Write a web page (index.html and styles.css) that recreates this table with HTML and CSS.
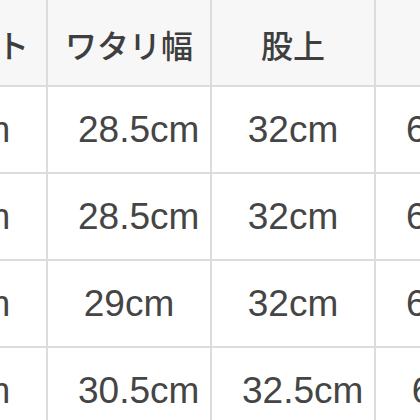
FILE: index.html
```html
<!DOCTYPE html>
<html lang="ja">
<head>
<meta charset="utf-8">
<link rel="stylesheet" href="styles.css">
</head>
<body>
<div class="viewport">
  <div class="size-table">
    <div class="cell head">ウエスト</div>
    <div class="cell head">ワタリ幅</div>
    <div class="cell head">股上</div>
    <div class="cell head">股下</div>

    <div class="cell">38cm</div>
    <div class="cell">28.5cm</div>
    <div class="cell">32cm</div>
    <div class="cell">64.5cm</div>

    <div class="cell">40cm</div>
    <div class="cell">28.5cm</div>
    <div class="cell">32cm</div>
    <div class="cell">64.5cm</div>

    <div class="cell">42cm</div>
    <div class="cell">29cm</div>
    <div class="cell">32cm</div>
    <div class="cell">65.5cm</div>

    <div class="cell">44cm</div>
    <div class="cell">30.5cm</div>
    <div class="cell">32.5cm</div>
    <div class="cell">66cm</div>
  </div>
</div>
</body>
</html>
```

FILE: styles.css
```css
html, body {
  margin: 0;
  padding: 0;
  background: #ffffff;
}

.viewport {
  width: 420px;
  height: 420px;
  overflow: hidden;
}

.size-table {
  display: grid;
  grid-template-columns: repeat(4, 162px);
  grid-auto-rows: 85px;
  gap: 2px;
  width: max-content;
  margin-left: -116px;
  background: #dcdcdc;
  font-family: "Liberation Sans", Arial, "Noto Sans CJK JP", sans-serif;
  color: #454545;
}

.cell {
  background: #ffffff;
  padding: 0 30px;
  white-space: nowrap;
  text-align: center;
  font-size: 37px;
  line-height: 85px;
}

.cell.head {
  background: #f7f7f7;
  padding: 4px 0 0;
  line-height: 81px;
  font-family: "Noto Sans CJK JP", sans-serif;
  font-weight: 500;
  font-size: 32px;
  color: #3e3e3e;
}
```
